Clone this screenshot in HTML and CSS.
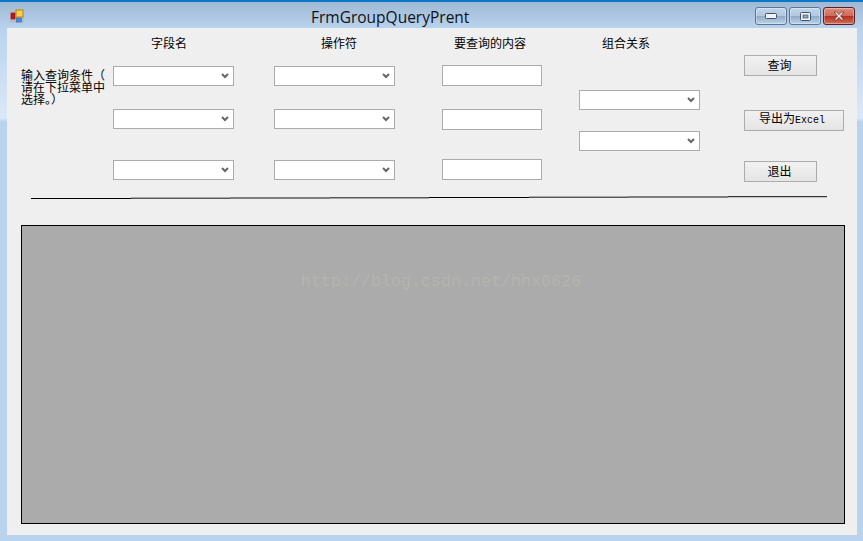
FILE: index.html
```html
<!DOCTYPE html>
<html lang="zh-CN">
<head>
<meta charset="utf-8">
<title>FrmGroupQueryPrent</title>
<link rel="stylesheet" href="styles.css">
</head>
<body>
<div class="window">
  <header class="titlebar">
    <svg class="app-icon" width="14" height="14" viewBox="0 0 14 14">
      <rect width="14" height="14" fill="#b4bdc9"/>
      <rect x="1" y="4" width="4" height="6" fill="#c01818" stroke="#8a1010" stroke-width="0.6"/>
      <rect x="6" y="1" width="7" height="7" fill="#f7cf50" stroke="#b8860b"/>
      <rect x="6.5" y="9" width="5" height="4" fill="#4a8ae0" stroke="#2f66b5" stroke-width="0.6"/>
    </svg>
    <span class="title">FrmGroupQueryPrent</span>
    <div class="win-buttons">
      <div class="win-btn">
        <svg width="12" height="6" viewBox="0 0 12 6"><rect x="0.5" y="0.5" width="11" height="5" rx="1" fill="#eef3f8" stroke="#3f536b"/></svg>
      </div>
      <div class="win-btn">
        <svg width="11" height="9" viewBox="0 0 11 9"><rect x="0.5" y="0.5" width="10" height="8" rx="1" fill="#eef3f8" stroke="#3f536b"/><rect x="3" y="3" width="5" height="3" fill="#8fa6c0" stroke="#3f536b" stroke-width="0.7"/></svg>
      </div>
      <div class="win-btn win-close">
        <svg width="14" height="10" viewBox="0 0 14 10"><path d="M2 1h2.500L7 3.500 9.500 1H12L8.500 5 12 9H9.500L7 6.500 4.500 9H2L5.500 5z" fill="#f4eeee" stroke="#6b2a28" stroke-width="0.7"/></svg>
      </div>
    </div>
  </header>

  <main class="client">
    <section class="controls">
      <p class="hint">输入查询条件（请在下拉菜单中选择。）</p>

      <div class="col col-field">
        <div class="heading heading-field">字段名</div>
        <div class="stack stack-top">
          <div class="combo"><select></select><svg class="chev" width="8" height="6" viewBox="0 0 8 6"><path d="M1 1l3 3 3-3" fill="none" stroke="#666" stroke-width="2"/></svg></div>
          <div class="combo"><select></select><svg class="chev" width="8" height="6" viewBox="0 0 8 6"><path d="M1 1l3 3 3-3" fill="none" stroke="#666" stroke-width="2"/></svg></div>
          <div class="combo combo-last"><select></select><svg class="chev" width="8" height="6" viewBox="0 0 8 6"><path d="M1 1l3 3 3-3" fill="none" stroke="#666" stroke-width="2"/></svg></div>
        </div>
      </div>

      <div class="col col-op">
        <div class="heading heading-op">操作符</div>
        <div class="stack stack-top">
          <div class="combo"><select></select><svg class="chev" width="8" height="6" viewBox="0 0 8 6"><path d="M1 1l3 3 3-3" fill="none" stroke="#666" stroke-width="2"/></svg></div>
          <div class="combo"><select></select><svg class="chev" width="8" height="6" viewBox="0 0 8 6"><path d="M1 1l3 3 3-3" fill="none" stroke="#666" stroke-width="2"/></svg></div>
          <div class="combo combo-last"><select></select><svg class="chev" width="8" height="6" viewBox="0 0 8 6"><path d="M1 1l3 3 3-3" fill="none" stroke="#666" stroke-width="2"/></svg></div>
        </div>
      </div>

      <div class="col col-value">
        <div class="heading heading-value">要查询的内容</div>
        <div class="stack stack-inputs">
          <input class="field" type="text">
          <input class="field" type="text">
          <input class="field field-last" type="text">
        </div>
      </div>

      <div class="col col-rel">
        <div class="heading heading-rel">组合关系</div>
        <div class="stack stack-rel">
          <div class="combo"><select></select><svg class="chev" width="8" height="6" viewBox="0 0 8 6"><path d="M1 1l3 3 3-3" fill="none" stroke="#666" stroke-width="2"/></svg></div>
          <div class="combo"><select></select><svg class="chev" width="8" height="6" viewBox="0 0 8 6"><path d="M1 1l3 3 3-3" fill="none" stroke="#666" stroke-width="2"/></svg></div>
        </div>
      </div>

      <div class="col col-actions">
        <button class="btn" type="button">查询</button>
        <button class="btn btn-wide" type="button">导出为<span class="latin">Excel</span></button>
        <button class="btn btn-exit" type="button">退出</button>
      </div>
    </section>

    <div class="rule">
      <span class="seg seg-a"></span>
      <span class="seg seg-b"></span>
      <span class="seg seg-c"></span>
      <span class="seg seg-d"></span>
      <span class="seg seg-e"></span>
      <span class="seg seg-f"></span>
      <span class="seg seg-g"></span>
      <span class="seg seg-h"></span>
    </div>

    <div class="grid-panel">
      <span class="watermark">http://blog.csdn.net/hhx0626</span>
    </div>
  </main>
</div>
</body>
</html>
```
FILE: styles.css
```css
* { box-sizing: border-box; }
html, body { margin: 0; padding: 0; overflow: hidden; }
body { width: 863px; height: 541px; }

.window {
  width: 863px;
  height: 541px;
  display: flex;
  flex-direction: column;
  border-top: 2px solid #0a78c9;
  background: linear-gradient(#9fb8d4 0, #b9d3ef 26px, #dbe8f7 116px, #b9d3ef 120px, #b9d3ef 100%);
}

.titlebar {
  height: 26px;
  flex: none;
  display: flex;
  align-items: flex-start;
}
.app-icon { margin: 7px 0 0 10px; flex: none; }
.title {
  margin: 6px 0 0 287px;
  font: 15.5px/18px "Open Sans", sans-serif;
  color: #111;
}
.win-buttons {
  margin: 5px 8px 0 auto;
  display: flex;
  gap: 2px;
}
.win-btn {
  width: 32px;
  height: 18px;
  border: 1px solid #5b7594;
  border-radius: 3px;
  background: linear-gradient(#c2d5ea 0, #b1c8e0 48%, #8fabc9 52%, #bcd2e8 100%);
  display: flex;
  align-items: center;
  justify-content: center;
  box-shadow: inset 0 0 0 1px rgba(255,255,255,.35);
}
.win-close {
  border-color: #5e1f22;
  background: linear-gradient(#dd8c7c 0, #cf6a5a 48%, #b3301f 52%, #d0705e 100%);
}

.client {
  flex: 1;
  margin: 0 6px 6px 7px;
  background: #efefef;
  display: flex;
  flex-direction: column;
}

.controls {
  height: 169px;
  flex: none;
  display: flex;
  align-items: flex-start;
  padding-left: 14px;
  font: 12px/12px "Noto Sans CJK SC", "Liberation Sans", sans-serif;
  color: #000;
}

.hint {
  width: 84px;
  margin: 41px 8px 0 0;
  font-size: 12px;
  line-height: 12px;
  line-break: anywhere;
  flex: none;
}

.col { flex: none; display: flex; flex-direction: column; }
.col-field { width: 121px; margin-right: 40px; padding-top: 9px; }
.col-op { width: 121px; margin-right: 47px; padding-top: 9px; }
.col-value { width: 100px; margin-right: 37px; padding-top: 9px; }
.col-rel { width: 121px; margin-right: 44px; padding-top: 9px; }
.col-actions { width: 100px; padding-top: 27px; align-items: flex-start; }

.heading { height: 12px; white-space: nowrap; }
.heading-field { padding-left: 38px; }
.heading-op { padding-left: 47px; }
.heading-value { padding-left: 12px; }
.heading-rel { padding-left: 23px; }

.stack { display: flex; flex-direction: column; }
.stack-top { padding-top: 17px; gap: 23px; }
.stack-inputs { padding-top: 16px; gap: 23px; }
.stack-rel { padding-top: 41px; gap: 21px; }

.combo { position: relative; width: 121px; height: 20px; }
.combo-last { margin-top: 8px; }
.combo select {
  display: block;
  width: 100%;
  height: 100%;
  margin: 0;
  padding: 0;
  appearance: none;
  border: 1px solid #ababab;
  border-radius: 0;
  background: #fff;
}
.chev { position: absolute; right: 5px; top: 7px; }

.field {
  display: block;
  width: 100px;
  height: 21px;
  margin: 0;
  padding: 0;
  border: 1px solid #ababab;
  border-radius: 0;
  background: #fff;
}
.field-last { margin-top: 6px; }

.btn {
  width: 73px;
  height: 21px;
  margin: 0;
  padding: 0 2px 2px 0;
  border: 1px solid #acacac;
  border-radius: 0;
  background: linear-gradient(#f1f1f1, #e5e5e5);
  font: 12px/12px "Noto Sans CJK SC", "Liberation Sans", sans-serif;
  color: #000;
  white-space: nowrap;
}
.btn-wide { width: 100px; margin-top: 34px; padding-right: 4px; }
.btn-exit { margin-top: 30px; }
.latin { font: 10px/12px "Liberation Mono", monospace; }

.rule {
  flex: none;
  height: 2px;
  margin: 0 0 0 24px;
  width: 796px;
  display: flex;
}
.seg { display: block; width: 99.500px; flex: none; }
.seg-a { height: 1px; margin-top: 1px; background: #000; }
.seg-b { height: 2px; background: linear-gradient(#a8a8a8 50%, #555 50%); }
.seg-c { height: 2px; background: #7d7d7d; }
.seg-d { height: 2px; background: linear-gradient(#555 50%, #a8a8a8 50%); }
.seg-e { height: 1px; margin-top: 0; background: #000; }
.seg-f { height: 2px; margin-top: -1px; background: linear-gradient(#a8a8a8 50%, #555 50%); }
.seg-g { height: 2px; margin-top: -1px; background: #7d7d7d; }
.seg-h { height: 2px; margin-top: -1px; background: linear-gradient(#333 50%, #c4c4c4 50%); }

.grid-panel {
  position: relative;
  flex: none;
  width: 824px;
  height: 299px;
  margin: 26px 0 0 14px;
  background: #ababab;
  border: 1px solid #000;
}
.watermark {
  position: absolute;
  left: 279px;
  top: 46px;
  font-family: "Liberation Mono", monospace;
  font-size: 16.67px;
  line-height: 20px;
  color: #b5b5ac;
  white-space: nowrap;
}
```
